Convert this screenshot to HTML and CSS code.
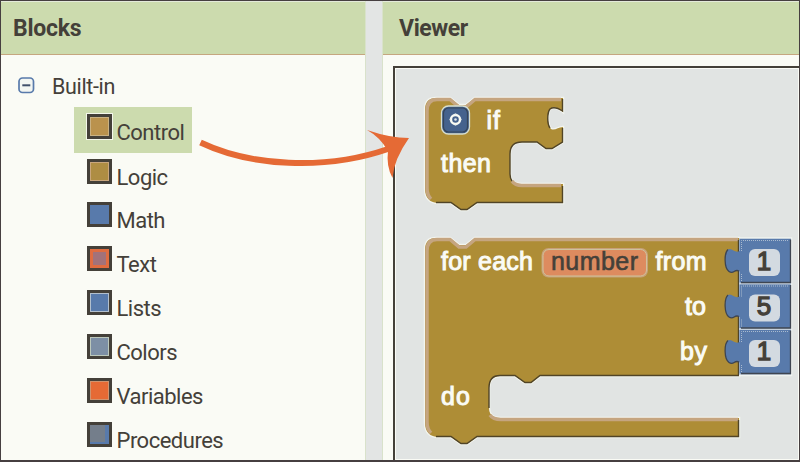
FILE: index.html
```
<!DOCTYPE html>
<html lang="en">
<head>
<meta charset="utf-8">
<title>Blocks editor</title>
<link rel="stylesheet" href="styles.css">
</head>
<body>
<div class="app">
  <aside class="palette">
    <h2 class="title">Blocks</h2>
    <div class="group">
      <svg class="collapse" width="17" height="17" viewBox="0 0 17 17"><rect x="1" y="1" width="14.5" height="14.5" rx="3.5" fill="#f3f6f2" stroke="#587aab" stroke-width="1.7"/><path d="M4.3 8.3h8" stroke="#40506b" stroke-width="2"/></svg>
      <span>Built-in</span>
    </div>
    <ul class="drawers">
      <li class="selected"><i class="swatch control"></i><span>Control</span></li>
      <li><i class="swatch logic"></i><span>Logic</span></li>
      <li><i class="swatch math"></i><span>Math</span></li>
      <li><i class="swatch text"></i><span>Text</span></li>
      <li><i class="swatch lists"></i><span>Lists</span></li>
      <li><i class="swatch colors"></i><span>Colors</span></li>
      <li><i class="swatch variables"></i><span>Variables</span></li>
      <li><i class="swatch procedures"></i><span>Procedures</span></li>
    </ul>
  </aside>
  <div class="gutter"></div>
  <main class="viewer">
    <h2 class="title">Viewer</h2>
    <div class="workspace">
      <svg width="403" height="392" viewBox="395 68 403 392">
        <defs>
          <g id="number-block">
            <path d="M739.5 239H790.500V282.500H739.500V271.500C734 268 734 275 729 271.500C724 268 724 253 728 249.500C732 247 735 254 739.500 251Z" fill="#587aab"/>
            <path d="M741 282.500H790.500V239.500M739 271C734 268.500 734 275 729 271.500C724 268 724 253 728 249.500" fill="none" stroke="#3e4551" stroke-width="1.3"/>
            <path d="M741.500 281V273M741.500 251V240.500H789" fill="none" stroke="#a9bacf" stroke-width="1" stroke-dasharray="1 1"/>
            <rect x="749" y="249" width="31" height="27" rx="6" fill="#d3dae1"/>
          </g>
        </defs>

        <path class="halo" d="M425 110Q425 98 436 98H450L459 105H466L475 98H563V112C558 108 554 106 550 109C547 113 547 124 551 129C555 131 558 127 563 127V142L552 149H546L537 142H522Q510 142 510 154V174Q510 184 521 184H563V203H477L467 210H461L451 203H439Q425 203 425 188Z"/>
        <path class="base" d="M425 110Q425 98 436 98H450L459 105H466L475 98H563V112C558 108 554 106 550 109C547 113 547 124 551 129C555 131 558 127 563 127V142L552 149H546L537 142H522Q510 142 510 154V174Q510 184 521 184H563V203H477L467 210H461L451 203H439Q425 203 425 188Z"/>
        <path class="light" d="M431 199Q427 195 427 188V111Q427 99.500 437 99.500H450L459 107H466L475 99.500H561M512 181Q515 185.500 522 185.500H561"/>
        <path class="dark" d="M562.500 99V111C558 108 554 106 550 109C547 113 547 124 550 128M562.500 128V142L552 148.500H546L537 142H522Q510 142 510 154V174Q510 178 512 181M562.500 186V202.500H477L467 209.500H461L451 202.500H436"/>
        <rect x="441.500" y="106" width="28" height="28" rx="7" fill="#45628d" stroke="#d8dfcf" stroke-width="1.3"/>
        <rect x="443.500" y="108" width="24" height="24" rx="5" fill="none" stroke="#354459" stroke-width="1.2"/>
        <circle cx="455.500" cy="119.500" r="4.500" fill="#45628d" stroke="#f8faf3" stroke-width="2.400"/>
        <path d="M455.500 113.500v1.500M455.500 124v1.500M449.500 119.500h1.500M460 119.500h1.500" stroke="#e9efea" stroke-width="1.700"/>
        <circle cx="455.500" cy="119.500" r="1.300" fill="#dfe6ea"/>
        <text class="label" x="486.500" y="128.500" textLength="13.500">if</text>
        <text class="label" x="441" y="171.500" textLength="50">then</text>

        <path class="halo" d="M425 250Q425 238 436 238H450L459 245H466L475 238H739V376H540L531 383H525L515 376H500Q489 376 489 388V408Q489 418 500 418H739V437H477L467 444H461L451 437H439Q425 437 425 422Z"/>
        <path class="base" d="M425 250Q425 238 436 238H450L459 245H466L475 238H739V376H540L531 383H525L515 376H500Q489 376 489 388V408Q489 418 500 418H739V437H477L467 444H461L451 437H439Q425 437 425 422Z"/>
        <path class="light" d="M431 433Q427 429 427 422V251Q427 239.500 437 239.500H450L459 247H466L475 239.500H738M490 415Q493 419.500 501 419.500H738"/>
        <path class="dark" d="M738.500 240V375.500H540L531 382.500H525L515 375.500H500Q489 375.500 489 388V408M738.500 420V436.500H477L467 443.500H461L451 436.500H436"/>
        <text class="label" x="441" y="270" textLength="92">for each</text>
        <rect x="541.500" y="248" width="106.500" height="29.500" rx="7" fill="#c7a078"/>
        <rect x="543" y="249.500" width="103.500" height="26.500" rx="6" fill="#dd8b5f" stroke="#cfc39c" stroke-width="1"/>
        <text class="field" x="551" y="270" textLength="87">number</text>
        <text class="label" x="655.500" y="270" textLength="51">from</text>
        <text class="label" x="685" y="315" textLength="21">to</text>
        <text class="label" x="680" y="360" textLength="27">by</text>
        <text class="label" x="441" y="405" textLength="29">do</text>
        <path d="M739 238.500H791V375H739" fill="none" stroke="#f0f3f0" stroke-width="2.500"/>
        <rect x="739" y="238" width="52" height="137" fill="#c4d0dc"/>
        <use href="#number-block"/>
        <use href="#number-block" y="45.500"/>
        <use href="#number-block" y="91"/>
        <text class="number" x="764" y="270">1</text>
        <text class="number" x="764" y="315">5</text>
        <text class="number" x="764" y="360">1</text>
      </svg>
    </div>
  </main>
  <svg class="arrow" width="222" height="60" viewBox="195 125 222 60">
    <path d="M200.500 142.500C250 166 324 171 388 149" fill="none" stroke="#e56a35" stroke-width="6"/>
    <path d="M367 130Q390 138 409 138Q394 159 392.500 178Q386 166 388 151Q380 137 367 130Z" fill="#e56a35"/>
  </svg>
</div>
</body>
</html>
```
FILE: styles.css
```
* { box-sizing: border-box; }
body { margin: 0; }
.app {
  position: relative;
  display: flex;
  width: 800px;
  height: 462px;
  border: 1px solid #463f40;
  border-bottom-width: 2px;
  background: #fafbf5;
  color: #444039;
  font-family: Roboto, sans-serif;
  overflow: hidden;
}
.palette { width: 364px; }
.gutter {
  width: 18px;
  background: #e3e5e4;
  border: solid #d9e2cb;
  border-width: 0 1px;
}
.viewer { flex: 1; display: flex; flex-direction: column; min-width: 0; }
.title {
  height: 54px;
  margin: 0;
  padding-left: 12px;
  border-top: 1px solid #e4eada;
  border-bottom: 1px solid #c5a67f;
  background: #ccdbae;
  font-size: 23px;
  font-weight: 700;
  line-height: 53px;
  letter-spacing: -.25px;
}
.viewer .title { padding-left: 16px; flex: none; letter-spacing: -.4px; }
.group {
  display: flex;
  align-items: center;
  gap: 17px;
  height: 52px;
  padding: 11px 0 0 17px;
  font-size: 21.5px;
  letter-spacing: -.35px;
}
.collapse { flex: none; position: relative; top: -1px; }
.drawers {
  display: flex;
  flex-direction: column;
  margin: 0;
  padding: 0 0 0 73px;
  list-style: none;
  font-size: 22px;
  letter-spacing: -.5px;
}
.drawers li {
  display: flex;
  gap: 4.5px;
  width: 118px;
  height: 43.9px;
  padding: 7px 0 0 13px;
}
.drawers li span { line-height: 26px; margin-top: 6px; }
.drawers .selected { height: 46px; background: #ccdbae; margin-bottom: -1.5px; }
.swatch { flex: none; width: 25px; height: 25px; border: 3px solid #444039; }
.control { background: #ba924d; box-shadow: inset 0 0 0 1px #c9b182, 0 0 0 1px #f3f6ea; }
.logic { background: #ae8d43; box-shadow: inset 0 0 0 1px #c9a67c; }
.math { background: #587aab; }
.text { background: #587aab; box-shadow: inset 0 0 0 3px #df6c40, inset 0 0 0 10px #a2727a; }
.lists { background: #587aab; box-shadow: inset 0 0 0 1px #b2bfcd; }
.colors { background: #7d8fa5; box-shadow: inset 0 0 0 1px #bcc8bb; }
.variables { background: #e56a35; box-shadow: inset 0 0 0 1px #ce9470; }
.procedures { background: #747e8b; box-shadow: inset -4px -2px #587aab; }
.workspace {
  flex: 1;
  margin: 11px 0 0 10px;
  border: solid #444039;
  border-width: 2px 0 0 2px;
  background: #e1e4e3;
  box-shadow: inset 1px 1px #fafbf5, inset -1px -1px #fafbf5;
  overflow: hidden;
}
.workspace svg { display: block; font: 25px "Liberation Sans", sans-serif; }
.halo { fill: none; stroke: #f3f5ef; stroke-width: 2.5; }
.base { fill: #ae8d36; }
.light { fill: none; stroke: #c5a580; stroke-width: 3.5; }
.dark { fill: none; stroke: #504427; stroke-width: 1.4; }
.label { fill: #fafbf5; stroke: #fafbf5; stroke-width: 1; }
.field { fill: #444039; stroke: #444039; stroke-width: .6; }
.number { fill: #444039; stroke: #444039; stroke-width: 1.3; text-anchor: middle; font-size: 26px; }
.arrow { position: absolute; left: 194px; top: 124px; }
```
